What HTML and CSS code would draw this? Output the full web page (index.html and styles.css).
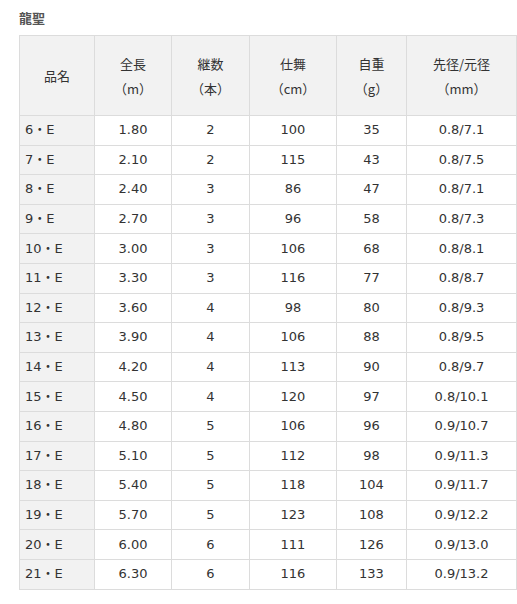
FILE: index.html
```html
<!DOCTYPE html>
<html lang="ja">
<head>
<meta charset="utf-8">
<link rel="stylesheet" href="styles.css">
</head>
<body>
<div class="page">
  <h3 class="title">龍聖</h3>
  <table class="spec">
    <colgroup>
      <col class="c1"><col class="c2"><col class="c3"><col class="c4"><col class="c5"><col class="c6">
    </colgroup>
    <thead>
      <tr>
        <th>品名</th>
        <th>全長<br>（m）</th>
        <th>継数<br>（本）</th>
        <th>仕舞<br>（cm）</th>
        <th>自重<br>（g）</th>
        <th>先径/元径<br>（mm）</th>
      </tr>
    </thead>
    <tbody>
      <tr><td>6・E</td><td>1.80</td><td>2</td><td>100</td><td>35</td><td>0.8/7.1</td></tr>
      <tr><td>7・E</td><td>2.10</td><td>2</td><td>115</td><td>43</td><td>0.8/7.5</td></tr>
      <tr><td>8・E</td><td>2.40</td><td>3</td><td>86</td><td>47</td><td>0.8/7.1</td></tr>
      <tr><td>9・E</td><td>2.70</td><td>3</td><td>96</td><td>58</td><td>0.8/7.3</td></tr>
      <tr><td>10・E</td><td>3.00</td><td>3</td><td>106</td><td>68</td><td>0.8/8.1</td></tr>
      <tr><td>11・E</td><td>3.30</td><td>3</td><td>116</td><td>77</td><td>0.8/8.7</td></tr>
      <tr><td>12・E</td><td>3.60</td><td>4</td><td>98</td><td>80</td><td>0.8/9.3</td></tr>
      <tr><td>13・E</td><td>3.90</td><td>4</td><td>106</td><td>88</td><td>0.8/9.5</td></tr>
      <tr><td>14・E</td><td>4.20</td><td>4</td><td>113</td><td>90</td><td>0.8/9.7</td></tr>
      <tr><td>15・E</td><td>4.50</td><td>4</td><td>120</td><td>97</td><td>0.8/10.1</td></tr>
      <tr><td>16・E</td><td>4.80</td><td>5</td><td>106</td><td>96</td><td>0.9/10.7</td></tr>
      <tr><td>17・E</td><td>5.10</td><td>5</td><td>112</td><td>98</td><td>0.9/11.3</td></tr>
      <tr><td>18・E</td><td>5.40</td><td>5</td><td>118</td><td>104</td><td>0.9/11.7</td></tr>
      <tr><td>19・E</td><td>5.70</td><td>5</td><td>123</td><td>108</td><td>0.9/12.2</td></tr>
      <tr><td>20・E</td><td>6.00</td><td>6</td><td>111</td><td>126</td><td>0.9/13.0</td></tr>
      <tr><td>21・E</td><td>6.30</td><td>6</td><td>116</td><td>133</td><td>0.9/13.2</td></tr>
    </tbody>
  </table>
</div>
</body>
</html>
```

FILE: styles.css
```css
html, body {
  margin: 0;
  padding: 0;
  background: #ffffff;
}

body {
  font-family: "DejaVu Sans", "Noto Sans CJK JP", sans-serif;
  font-size: 13px;
  color: #333333;
}

.page {
  padding: 10px 0 0 19px;
}

.title {
  margin: 0 0 9px 0;
  font-family: "Noto Sans CJK JP", sans-serif;
  font-size: 13px;
  font-weight: bold;
  line-height: 16px;
  color: #555555;
}

.spec {
  border-collapse: collapse;
  table-layout: fixed;
  width: 497px;
}

.c1 { width: 75px; }
.c2 { width: 77px; }
.c3 { width: 78px; }
.c4 { width: 87px; }
.c5 { width: 70px; }
.c6 { width: 110px; }

.spec th,
.spec td {
  border: 1px solid #dcdcdc;
  padding: 0;
  text-align: center;
  vertical-align: middle;
  font-weight: normal;
}

.spec th {
  background: #f2f2f2;
  height: 79px;
  line-height: 25px;
  font-family: "Noto Sans CJK JP", sans-serif;
}

.spec td {
  height: 28.6px;
  line-height: 16px;
}

.spec td:first-child {
  background: #f2f2f2;
  text-align: left;
  padding-left: 5px;
}
```
